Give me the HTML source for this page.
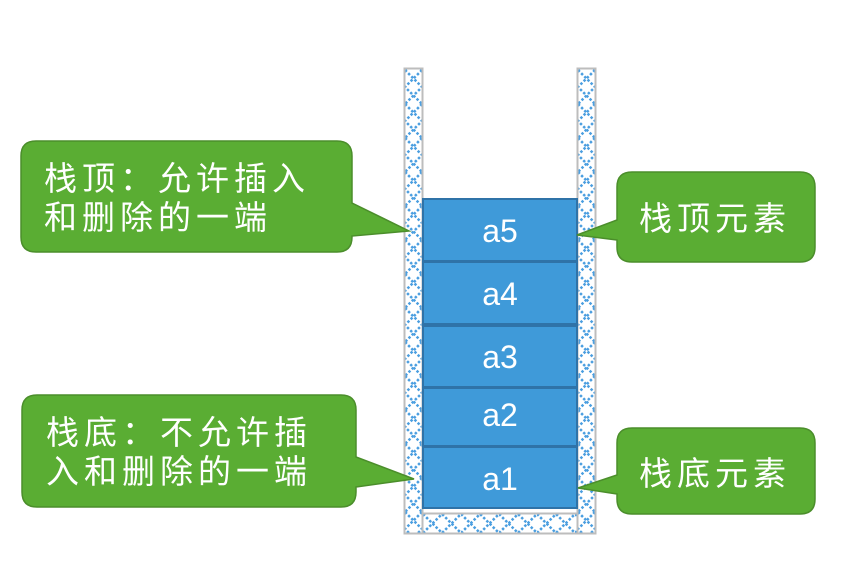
<!DOCTYPE html>
<html><head><meta charset="utf-8"><style>
html,body{margin:0;padding:0;background:#fff;}
svg{display:block}
text{font-family:"Liberation Sans","Noto Sans CJK SC",sans-serif;}
</style></head><body>
<svg width="864" height="574" viewBox="0 0 864 574" xmlns="http://www.w3.org/2000/svg">
<defs>
<pattern id="p" x="405" y="70" width="17" height="34" patternUnits="userSpaceOnUse">
<rect width="17" height="34" fill="#fff"/>
<path d="M0 0 L17 17 L0 34 M17 0 L0 17 L17 34" fill="none" stroke="#4a9ee0" stroke-width="2.5" stroke-dasharray="2.5 2"/>
</pattern>
<pattern id="p2" x="578" y="70" width="17" height="34" patternUnits="userSpaceOnUse">
<rect width="17" height="34" fill="#fff"/>
<path d="M0 0 L17 17 L0 34 M17 0 L0 17 L17 34" fill="none" stroke="#4a9ee0" stroke-width="2.5" stroke-dasharray="2.5 2"/>
</pattern>
<pattern id="q" x="423" y="514" width="38" height="19" patternUnits="userSpaceOnUse">
<rect width="38" height="19" fill="#fff"/>
<path d="M0 0 L19 19 L38 0 M0 19 L19 0 L38 19" fill="none" stroke="#4a9ee0" stroke-width="2.5" stroke-dasharray="2.5 2"/>
</pattern>
</defs>
<rect x="404.5" y="68.5" width="18" height="465" fill="url(#p)" stroke="#bdbdbd" stroke-width="2"/>
<rect x="577.5" y="68.5" width="18" height="465" fill="url(#p2)" stroke="#bdbdbd" stroke-width="2"/>
<rect x="422.5" y="513.5" width="155" height="20" fill="url(#q)" stroke="#bdbdbd" stroke-width="2"/>
<g fill="#3f9ad9" stroke="#2f73a8" stroke-width="2">
<rect x="423" y="199" width="154" height="62"/>
<rect x="423" y="262" width="154" height="62"/>
<rect x="423" y="326" width="154" height="61"/>
<rect x="423" y="388" width="154" height="58"/>
<rect x="423" y="447" width="154" height="61"/>
</g>
<g fill="#fff" font-size="32" text-anchor="middle">
<text x="500" y="242">a5</text>
<text x="500" y="305">a4</text>
<text x="500" y="368">a3</text>
<text x="500" y="426">a2</text>
<text x="500" y="490">a1</text>
</g>
<g fill="#5aad33" stroke="#4b8e2b" stroke-width="1.5">
<path d="M36 141 H337 Q352 141 352 156 V203 L409 231 L352 236 V237 Q352 252 337 252 H36 Q21 252 21 237 V156 Q21 141 36 141 Z"/>
<path d="M632 172 H800 Q815 172 815 187 V247 Q815 262 800 262 H632 Q617 262 617 247 V240 L577 235 L617 220 V187 Q617 172 632 172 Z"/>
<path d="M37 395 H341 Q356 395 356 410 V457 L414 479 L356 487 V492 Q356 507 341 507 H37 Q22 507 22 492 V410 Q22 395 37 395 Z"/>
<path d="M632 428 H800 Q815 428 815 443 V499 Q815 514 800 514 H632 Q617 514 617 499 V494 L578 488 L617 475 V443 Q617 428 632 428 Z"/>
</g>
<g fill="#fff" font-size="33" letter-spacing="5">
<text x="44" y="190">栈顶：允许插入</text>
<text x="44" y="229">和删除的一端</text>
<text x="639" y="230">栈顶元素</text>
<text x="46" y="444">栈底：不允许插</text>
<text x="46" y="483">入和删除的一端</text>
<text x="639" y="485">栈底元素</text>
</g>
</svg>
</body></html>
